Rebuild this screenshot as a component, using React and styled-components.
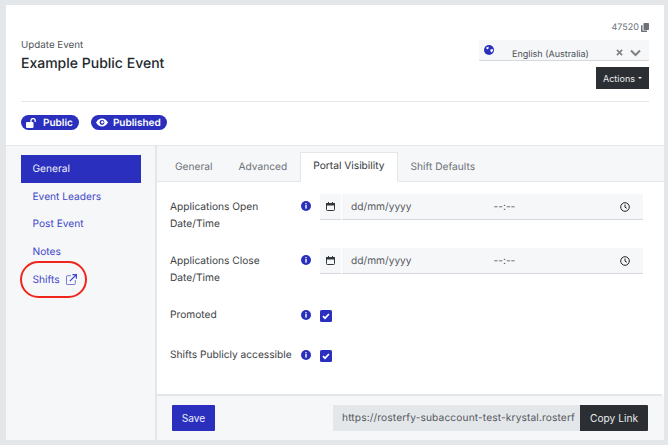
import React from "react";
import styled, { createGlobalStyle } from "styled-components";

const Global = createGlobalStyle`
  html, body { margin: 0; padding: 0; background: #e4e7ea; }
  body { font-family: Inter, "Liberation Sans", sans-serif; width: 668px; height: 445px; overflow: hidden; text-rendering: geometricPrecision; }
  * { box-sizing: border-box; }
`;
const Page = styled.div`padding: 5px 4px 5px 6px; height: 445px;`;
const Card = styled.div`background: #fff; height: 435px; display: flex; flex-direction: column;`;
const Header = styled.header`height: 140px; padding: 0 15px; display: flex; flex-direction: column; flex: none;`;
const TopRow = styled.div`display: flex; justify-content: space-between; border-bottom: 1px solid #e4e7ea; height: 97px;`;
const TitleBlock = styled.div`padding-top: 35px;`;
const Sub = styled.div`font-size: 9.8px; line-height: 12px; color: #4f5459;`;
const Title = styled.h1`margin: 3px 0 0; font-size: 14px; line-height: 18px; font-weight: 500; color: #24282c;`;
const Right = styled.div`width: 170px; display: flex; flex-direction: column; align-items: flex-end; padding-top: 17px;`;
const IdRow = styled.div`display: flex; align-items: center; gap: 2px; font-size: 9px; line-height: 11px; color: #6c7278; height: 11px;`;
const LangSelect = styled.div`
  margin-top: 7px; width: 170px; height: 21px; background: #f6f7f9; border-bottom: 1px solid #d5d9dd;
  display: flex; padding-left: 5px; font-size: 9px; color: #4a4f54;
`;
const LangGlobe = styled.span`display: block; margin-top: 5px; height: 10px;`;
const LangText = styled.span`margin: 9px 0 0 18px; line-height: 12px; flex: 1;`;
const LangIcons = styled.span`display: flex; gap: 7px; align-items: center; padding-right: 8px; height: 17px; margin-top: 4px;`;
const ActionsBtn = styled.button`
  margin-top: 6px; width: 53px; height: 22px; background: #2b2f33; border: 0; color: #e9ebed;
  font: 9px Inter, sans-serif; display: flex; align-items: center; justify-content: center; gap: 3px; padding: 0;
`;
const Caret = styled.i`width: 0; height: 0; border: 2.5px solid transparent; border-top-color: #e9ebed; border-bottom: 0; display: block;`;
const Badges = styled.div`display: flex; gap: 12px; padding-top: 13px;`;
const Badge = styled.span`
  height: 15px; border-radius: 8px; background: #2a30bd; color: #fff; font-size: 10px; font-weight: 600;
  display: flex; align-items: center; gap: 5px; padding: 0 6px 0 5px;
`;
const BadgeLabel = styled.span`display: block; padding-top: 1px; line-height: 12px;`;
const Body = styled.div`flex: 1; display: flex; border-top: 1px solid #e4e7ea; min-height: 0;`;
const Side = styled.nav`width: 151px; flex: none; background: #f6f7f9; border-right: 2px solid #e4e7ea; padding: 9px 15px 0; display: flex; flex-direction: column;`;
const NavItem = styled.a`
  height: 27.75px; width: 120px; display: flex; align-items: center; gap: 6px; padding: 0 0 0 11.5px; font-size: 10.2px; flex: none;
  color: ${p => (p.$active ? "#f0f0fa" : "#4248c6")};
  background: ${p => (p.$active ? "#2a30bd" : "transparent")};
`;
const Main = styled.div`flex: 1; display: flex; flex-direction: column; min-width: 0;`;
const Tabs = styled.div`height: 36px; flex: none; background: #f6f7f9; display: flex; padding: 6px 0 0 5px; border-bottom: 1px solid #e4e7ea; width: 100%;`;
const Tab = styled.div`
  height: 30px; padding: 0 12px 2px; display: flex; align-items: center; font-size: 10.2px; white-space: nowrap;
  color: ${p => (p.$active ? "#33383c" : "#6c7278")};
  background: ${p => (p.$active ? "#fff" : "transparent")};
  border: 1px solid ${p => (p.$active ? "#e4e7ea" : "transparent")};
  border-bottom: ${p => (p.$active ? "1px solid #fff" : "0")};
`;
const Pane = styled.div`flex: 1; background: #fff; margin: 0 2px 0 0; padding: 12px 19px 0 13px; display: flex; flex-direction: column; border-bottom: 2px solid #e4e7ea; min-height: 0;`;
const Row = styled.div`display: grid; grid-template-columns: 131px 19px 1fr; height: ${p => p.$h}px; align-items: start;`;
const Label = styled.label`font-size: 10.2px; line-height: 17px; color: #3d4246; padding-top: 4.5px; white-space: ${p => (p.$nowrap ? "nowrap" : "normal")};`;
const InfoWrap = styled.span`display: block; padding-top: ${p => p.$top || 0}px;`;
const DateField = styled.div`display: flex; gap: 1px; height: 26px; font-size: 10.2px; color: #55595e;`;
const CalSeg = styled.span`width: 21px; background: #f6f7f9; border-bottom: 1px solid #d5d9dd; display: flex; align-items: center; justify-content: center;`;
const DateSeg = styled.span`flex: 1; background: #f6f7f9; border-bottom: 1px solid #d5d9dd; display: flex; align-items: center; padding: 0 13px 0 9px;`;
const Time = styled.span`margin-left: 82px; flex: 1;`;
const Check = styled.span`display: flex; width: 12px; height: 12px; border-radius: 1.5px; background: #2a30bd; align-items: center; justify-content: center; margin-top: ${p => p.$top}px;`;
const Footer = styled.div`height: 44px; flex: none; background: #f6f7f9; display: flex; align-items: center; padding: 0 16px 0 15px; justify-content: space-between;`;
const Save = styled.button`width: 43px; height: 26px; background: #2a30bd; border: 0; border-radius: 1px; color: #eceefa; font: 10.2px Inter, sans-serif; padding: 0;`;
const LinkGroup = styled.div`display: flex; height: 26px;`;
const LinkInput = styled.div`width: 247px; background: #e4e7ea; font-size: 10.2px; color: #55595e; padding: 0 0 0 9px; display: flex; align-items: center; letter-spacing: .12px; white-space: nowrap;`;
const CopyBtn = styled.button`width: 68px; background: #2b2f33; border: 0; color: #e9ebed; font: 10.2px Inter, sans-serif; padding: 0; border-radius: 0 1px 1px 0;`;
const Ring = styled.span`
  position: absolute; left: 20px; top: 261px; width: 67px; height: 37px; border: 2px solid #f0261c; border-radius: 19px; pointer-events: none;
`;

const Info = () => (
  <svg width="10" height="10" viewBox="0 0 10 10" style={{ display: "block" }}>
    <circle cx="5" cy="5" r="5" fill="#2a30bd" />
    <rect x="4.3" y="4" width="1.4" height="3.6" fill="#fff" />
    <rect x="4.3" y="2.1" width="1.4" height="1.2" fill="#fff" />
  </svg>
);
const Cal = () => (
  <svg width="9" height="9" viewBox="0 0 9 9" fill="none" stroke="#33383c" strokeWidth="1">
    <rect x=".5" y="1.5" width="8" height="7" rx=".8" />
    <rect x=".5" y="1.5" width="8" height="1.5" fill="#33383c" />
    <path d="M2.5 0v1.5M6.5 0v1.5" />
  </svg>
);
const Clock = () => (
  <svg width="10" height="10" viewBox="0 0 10 10" fill="none" stroke="#222" strokeWidth="1">
    <circle cx="5" cy="5" r="4.3" />
    <path d="M5 2.5v2.7l1.8 1.1" />
  </svg>
);
const Tick = () => (
  <svg width="8" height="8" viewBox="0 0 8 8" fill="none" stroke="#fff" strokeWidth="1.7">
    <path d="M1 4.2l2 2 4-4.2" />
  </svg>
);
const Ext = () => (
  <svg width="11" height="11" viewBox="0 0 11 11" fill="none" stroke="#4248c6" strokeWidth="1">
    <path d="M5 1.7H1.2a.7.7 0 0 0-.7.7v7.4c0 .4.3.7.7.7h7.4c.4 0 .7-.3.7-.7V6" opacity=".7" />
    <path d="M3.8 7.2 10 1M6.4.7h4v4" strokeWidth="1.2" />
  </svg>
);
const DateRow = ({ label1 }) => (
  <Row $h={54}>
    <Label>Applications {label1}<br />Date/Time</Label>
    <InfoWrap $top={7}><Info /></InfoWrap>
    <DateField>
      <CalSeg><Cal /></CalSeg>
      <DateSeg>dd/mm/yyyy<Time>--:--</Time><Clock /></DateSeg>
    </DateField>
  </Row>
);

export default function App() {
  return (
    <Page>
      <Global />
      <Card>
        <Header>
          <TopRow>
            <TitleBlock>
              <Sub>Update Event</Sub>
              <Title>Example Public Event</Title>
            </TitleBlock>
            <Right>
              <IdRow>
                47520
                <svg width="8" height="9" viewBox="0 0 8 9" fill="#6c7278">
                  <rect x="2.5" y="0" width="5.5" height="7" rx=".7" />
                  <path d="M0 2.2h1.5v5.3H6V9H.7A.7.7 0 0 1 0 8.3z" />
                </svg>
              </IdRow>
              <LangSelect>
                <LangGlobe>
                  <svg width="10" height="10" viewBox="0 0 10 10" style={{ display: "block" }}>
                    <circle cx="5" cy="5" r="5" fill="#2a30bd" />
                    <path d="M2.2 2.6 4.4 1.8 4.8 3.2 3.6 4.2 2.6 4zM6.4 4.6l2.2-.5.5 1.500-1.500 2-1.200-1.400z" fill="#fff" />
                  </svg>
                </LangGlobe>
                <LangText>English (Australia)</LangText>
                <LangIcons>
                  <svg width="7" height="7" viewBox="0 0 8 8" stroke="#7d8287" strokeWidth="1.8"><path d="M1 1l6 6M7 1 1 7" /></svg>
                  <svg width="11" height="8" viewBox="0 0 11 8" fill="none" stroke="#7d8287" strokeWidth="2"><path d="M1 1.5l4.500 4.500L10 1.500" /></svg>
                </LangIcons>
              </LangSelect>
              <ActionsBtn>Actions<Caret /></ActionsBtn>
            </Right>
          </TopRow>
          <Badges>
            <Badge>
              <svg width="12" height="10" viewBox="0 0 12 10" fill="#fff">
                <rect x="0" y="4" width="7.5" height="6" rx="1" />
                <path d="M5 4V2.6a2.1 2.1 0 0 1 4.200 0V4" fill="none" stroke="#fff" strokeWidth="1.3" />
              </svg>
              <BadgeLabel>Public</BadgeLabel>
            </Badge>
            <Badge>
              <svg width="12" height="9" viewBox="0 0 12 9">
                <path d="M0 4.500C1.500 1.700 3.600.4 6 .4s4.500 1.300 6 4.100C10.500 7.300 8.400 8.600 6 8.600S1.500 7.300 0 4.500z" fill="#fff" />
                <circle cx="6" cy="4.500" r="2.400" fill="#2a30bd" />
                <circle cx="6.300" cy="4.300" r="1.200" fill="#fff" />
              </svg>
              <BadgeLabel>Published</BadgeLabel>
            </Badge>
          </Badges>
        </Header>
        <Body>
          <Side>
            <NavItem $active>General</NavItem>
            <NavItem>Event Leaders</NavItem>
            <NavItem>Post Event</NavItem>
            <NavItem>Notes</NavItem>
            <NavItem>Shifts <Ext /></NavItem>
          </Side>
          <Main>
            <Tabs>
              <Tab>General</Tab>
              <Tab>Advanced</Tab>
              <Tab $active>Portal Visibility</Tab>
              <Tab>Shift Defaults</Tab>
            </Tabs>
            <Pane>
              <DateRow label1="Open" />
              <DateRow label1="Close" />
              <Row $h={40}>
                <Label>Promoted</Label>
                <InfoWrap $top={8}><Info /></InfoWrap>
                <Check $top={8}><Tick /></Check>
              </Row>
              <Row $h={40}>
                <Label $nowrap>Shifts Publicly accessible</Label>
                <InfoWrap $top={8}><Info /></InfoWrap>
                <Check $top={8}><Tick /></Check>
              </Row>
            </Pane>
            <Footer>
              <Save>Save</Save>
              <LinkGroup>
                <LinkInput>https://rosterfy-subaccount-test-krystal.rosterf</LinkInput>
                <CopyBtn>Copy Link</CopyBtn>
              </LinkGroup>
            </Footer>
          </Main>
        </Body>
      </Card>
      <Ring />
    </Page>
  );
}
